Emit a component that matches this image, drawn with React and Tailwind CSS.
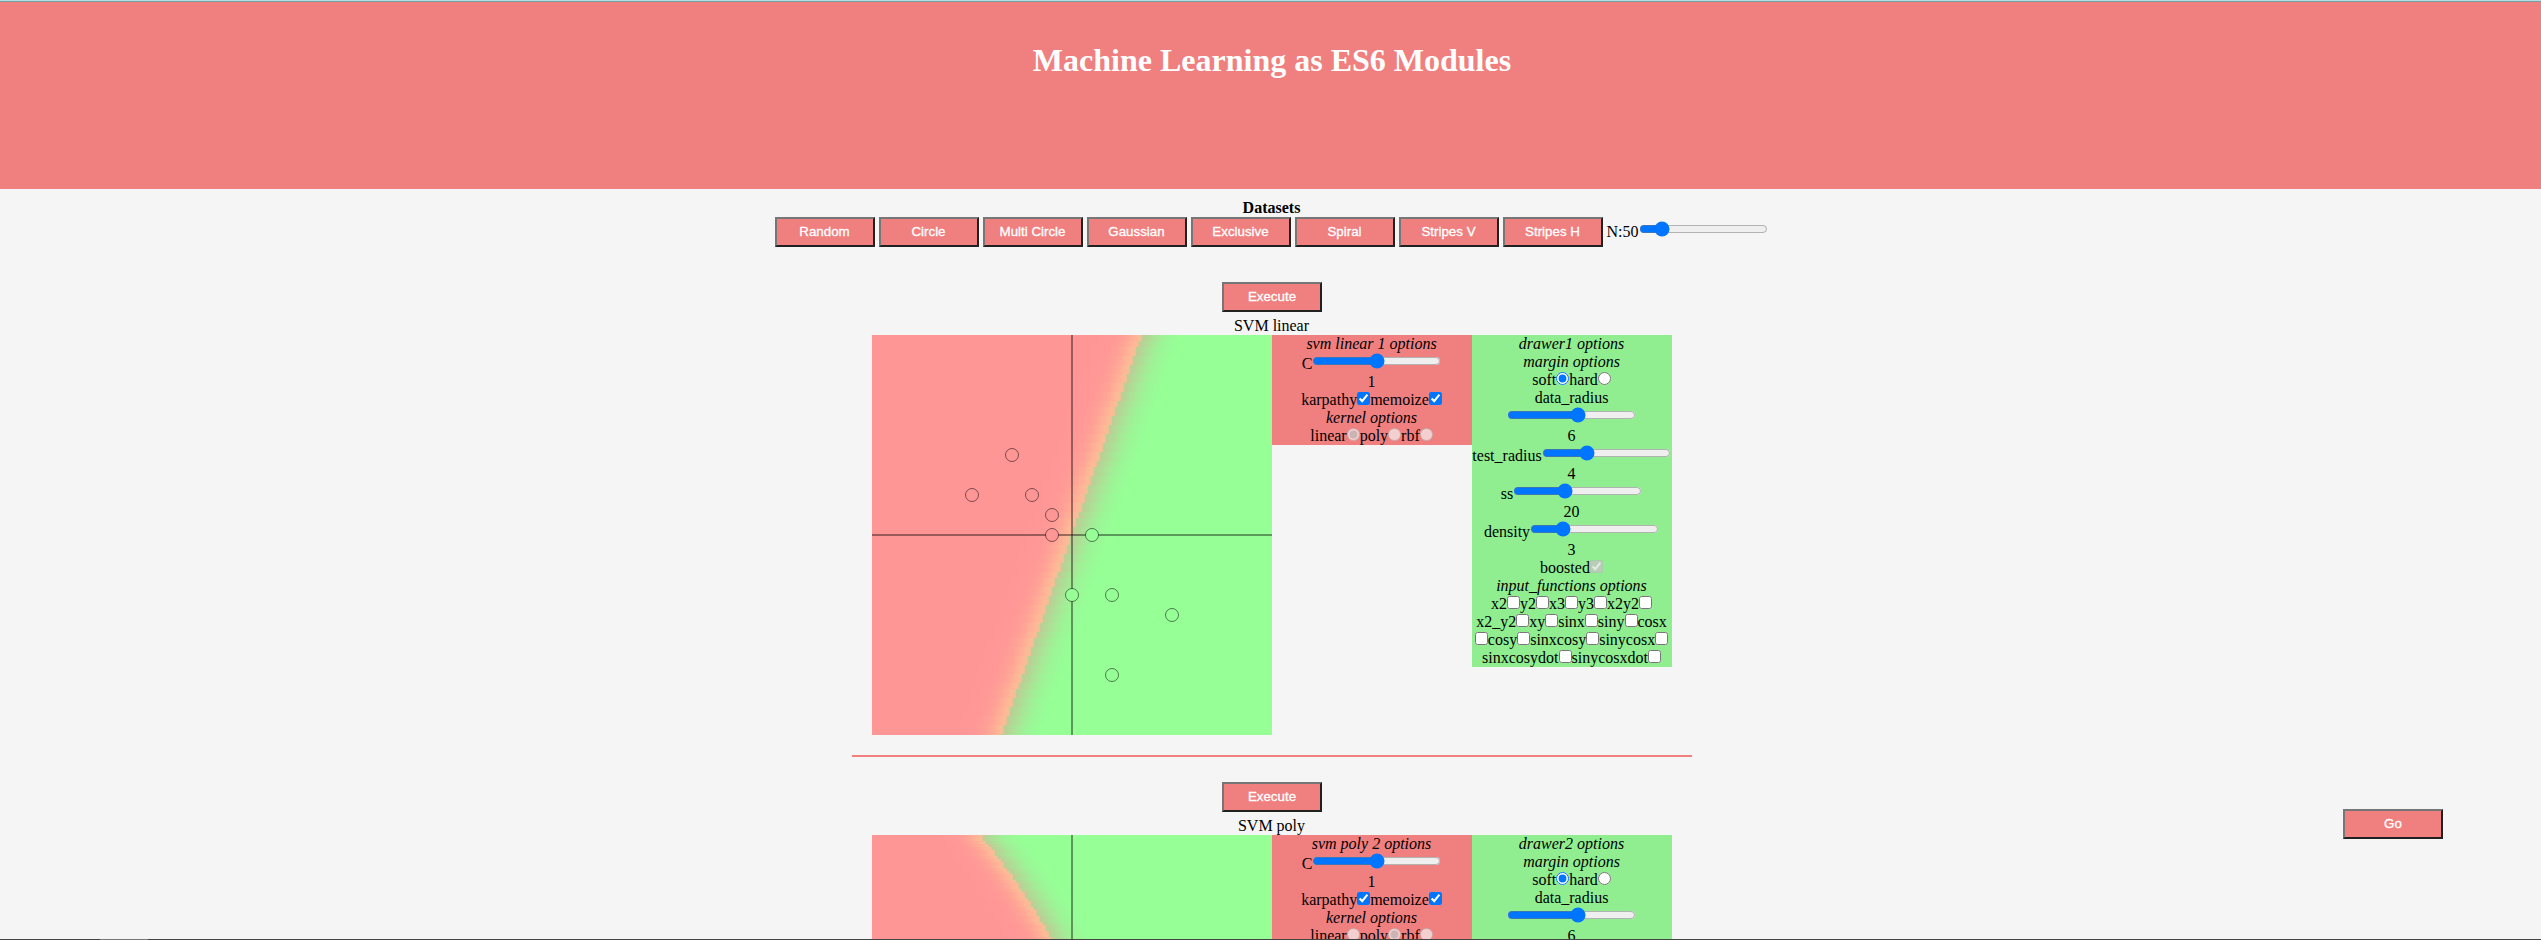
const PANEL_RED = 'w-[200px] bg-[#f08080] pr-px text-center';
const PANEL_GREEN = 'w-[200px] bg-[#90ee90] pr-px text-center';

function Button({ children }) {
  return (
    <button
      type="button"
      className="h-[30px] w-[100px] border-2 border-t-[#767676] border-l-[#767676] border-r-[#212121] border-b-[#212121] bg-[#f08080] p-0 text-center font-['Liberation_Sans',Arial,sans-serif] text-[13.333px] leading-normal text-white [-webkit-text-stroke:0.3px_white]"
    >
      {children}
    </button>
  );
}

function Range({ percent }) {
  return (
    <input
      type="range"
      min="0"
      max="100"
      step="any"
      defaultValue={percent}
      className="m-0 inline h-4 w-[129px] align-baseline"
    />
  );
}

function Tick({ type = 'checkbox', checked = false, disabled = false }) {
  return (
    <input
      type={type}
      defaultChecked={checked}
      disabled={disabled}
      className="m-0 inline h-[13px] w-[13px] align-baseline"
    />
  );
}

function Title({ children }) {
  return <div className="italic">{children}</div>;
}

function Slider({ label, percent, value, wrap = false }) {
  return (
    <>
      {wrap && <div>{label}</div>}
      <div>
        {!wrap && label}
        <Range percent={percent} />
      </div>
      <div>{value}</div>
    </>
  );
}

function Checks({ rows }) {
  return rows.map((row) => (
    <div key={row.join()}>
      {row.map((item, i) => (item === '#' ? <Tick key={i} /> : <span key={i}>{item}</span>))}
    </div>
  ));
}

const FUNCTION_ROWS = [
  ['x2', '#', 'y2', '#', 'x3', '#', 'y3', '#', 'x2y2', '#'],
  ['x2_y2', '#', 'xy', '#', 'sinx', '#', 'siny', '#', 'cosx'],
  ['#', 'cosy', '#', 'sinxcosy', '#', 'sinycosx', '#'],
  ['sinxcosydot', '#', 'sinycosxdot', '#'],
];

const POINTS = [
  [140, 120, 0],
  [100, 160, 0],
  [160, 160, 0],
  [180, 180, 0],
  [180, 200, 0],
  [220, 200, 1],
  [200, 260, 1],
  [240, 260, 1],
  [300, 280, 1],
  [240, 340, 1],
];

const linearEdge = (y) => 269.7 - 0.351 * y;
const polyEdge = (y) => 110 + 0.81 * y - 0.00125 * y * y;

const CELL = 3;
const STRIPS = Array.from({ length: 134 }, (_, i) => i * CELL);

function Plot({ id, edge }) {
  return (
    <svg width="400" height="400" viewBox="0 0 400 400" className="block">
      <defs>
        <linearGradient id={id} gradientUnits="userSpaceOnUse" x1="-50" x2="50" y1="0" y2="0">
          <stop offset="0" stopColor="#ff9696" />
          <stop offset="0.2" stopColor="#ff9896" />
          <stop offset="0.3" stopColor="#ff9e96" />
          <stop offset="0.38" stopColor="#ffaa96" />
          <stop offset="0.44" stopColor="#ffb696" />
          <stop offset="0.47" stopColor="#fbbc96" />
          <stop offset="0.5" stopColor="#e6c396" />
          <stop offset="0.5" stopColor="#c0cb96" />
          <stop offset="0.56" stopColor="#b2d896" />
          <stop offset="0.63" stopColor="#a8e696" />
          <stop offset="0.73" stopColor="#9cf596" />
          <stop offset="0.88" stopColor="#96ff96" />
        </linearGradient>
      </defs>
      {STRIPS.map((y) => (
        <rect
          key={y}
          x="-500"
          width="1000"
          height={CELL}
          fill={`url(#${id})`}
          shapeRendering="crispEdges"
          transform={`translate(${Math.round(edge(y) / CELL) * CELL} ${y})`}
        />
      ))}
      <rect x="199" y="0" width="2" height="400" fill="#000" fillOpacity="0.4" />
      <rect x="0" y="199" width="400" height="2" fill="#000" fillOpacity="0.4" />
      {POINTS.map(([x, y, side]) => (
        <circle
          key={`${x}-${y}`}
          cx={x}
          cy={y}
          r="6.5"
          fill={side ? '#96ff96' : '#ff9696'}
          stroke="#000"
          strokeOpacity="0.5"
        />
      ))}
    </svg>
  );
}

function Experiment({ n, kernel, edge }) {
  return (
    <section className="flex h-[500px] flex-col items-center">
      <Button>Execute</Button>
      <div className="mt-[5px] pr-px">SVM {kernel}</div>
      <div className="flex items-start">
        <Plot id={`margin-${n}`} edge={edge} />
        <div className={PANEL_RED}>
          <Title>
            svm {kernel} {n} options
          </Title>
          <Slider label="C" percent={50} value="1" />
          <div>
            karpathy
            <Tick checked />
            memoize
            <Tick checked />
          </div>
          <Title>kernel options</Title>
          <div>
            linear
            <Tick type="radio" checked={kernel === 'linear'} disabled />
            poly
            <Tick type="radio" checked={kernel === 'poly'} disabled />
            rbf
            <Tick type="radio" disabled />
          </div>
        </div>
        <div className={PANEL_GREEN}>
          <Title>drawer{n} options</Title>
          <Title>margin options</Title>
          <div>
            soft
            <Tick type="radio" checked />
            hard
            <Tick type="radio" />
          </div>
          <Slider label="data_radius" percent={55.6} value="6" wrap />
          <Slider label="test_radius" percent={33.3} value="4" />
          <Slider label="ss" percent={38.8} value="20" />
          <Slider label="density" percent={22.2} value="3" />
          <div>
            boosted
            <Tick checked disabled />
          </div>
          <Title>input_functions options</Title>
          <Checks rows={FUNCTION_ROWS} />
        </div>
      </div>
      <div className="mt-5 h-0.5 w-[840px] bg-[#f08080]" />
    </section>
  );
}

const DATASETS = ['Random', 'Circle', 'Multi Circle', 'Gaussian', 'Exclusive', 'Spiral', 'Stripes V', 'Stripes H'];

export default function App() {
  return (
    <div className="relative h-[940px] w-full overflow-hidden bg-[#f5f5f5] font-['Liberation_Serif','Times_New_Roman',serif] text-[16px] leading-normal whitespace-nowrap text-black">
      <div className="w-[2544px] leading-[normal]">
        <div className="h-px bg-[#b0e0e6]" />
        <div className="h-px bg-[#7b9ca0]" />
        <header className="h-[187px] bg-[#f08080] pt-10 text-center text-white">
          <h1 className="text-[32px] leading-[37px] font-bold">Machine Learning as ES6 Modules</h1>
        </header>
        <div className="mt-[10px] pr-px text-center font-bold">Datasets</div>
        <div className="flex h-[65px] items-start justify-center gap-1 pr-0.5">
          {DATASETS.map((name) => (
            <Button key={name}>{name}</Button>
          ))}
          <div className="pt-1">
            N:50
            <Range percent={13.8} />
          </div>
        </div>
        <Experiment n={1} kernel="linear" edge={linearEdge} />
        <Experiment n={2} kernel="poly" edge={polyEdge} />
      </div>
      <div className="absolute top-[809px] left-[2343px]">
        <Button>Go</Button>
      </div>
      <div className="absolute bottom-0 left-0 flex h-px w-full bg-[#444444]">
        <div className="ml-[100px] h-px w-12 bg-[#777777]" />
      </div>
    </div>
  );
}
